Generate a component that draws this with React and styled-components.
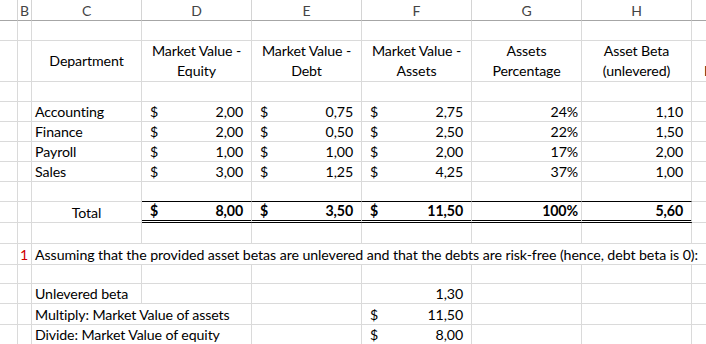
import React from 'react'
import styled, { createGlobalStyle } from 'styled-components'

const GlobalStyle = createGlobalStyle`
    html, body {
        margin: 0;
        padding: 0;
        background: #fff;
        overflow: hidden;
    }
    body {
        font-family: Lato, "Liberation Sans", sans-serif;
        font-size: 14.2px;
        letter-spacing: -0.12px;
        color: #000;
    }
`;

const COLS = '18px 14px repeat(7, 110px)'
const GRID = '#dadada'

const departments = [
    { name: 'Accounting', equity: '2,00', debt: '0,75', assets: '2,75', pct: '24%', beta: '1,10' },
    { name: 'Finance', equity: '2,00', debt: '0,50', assets: '2,50', pct: '22%', beta: '1,50' },
    { name: 'Payroll', equity: '1,00', debt: '1,00', assets: '2,00', pct: '17%', beta: '2,00' },
    { name: 'Sales', equity: '3,00', debt: '1,25', assets: '4,25', pct: '37%', beta: '1,00' },
]

const headers = [
    ['Market Value -', 'Equity'],
    ['Market Value -', 'Debt'],
    ['Market Value -', 'Assets'],
    ['Assets', 'Percentage'],
    ['Asset Beta', '(unlevered)'],
]

function Blank({ n = 1 }) {
    return Array.from({ length: n }).map((_, i) => <Cell key={i} />)
}

function Money({ value, bold, bottom }) {
    return (
        <Cell $bold={bold} $bottom={bottom}>
            <Acct>
                <span>$</span>
                <span>{value}</span>
            </Acct>
        </Cell>
    )
}

function App() {
    return (
        <Sheet>
            <GlobalStyle />

            <HeadRow>
                {['', 'B', 'C', 'D', 'E', 'F', 'G', 'H', ''].map((l, i) => (
                    <HeadCell key={i}>{l}</HeadCell>
                ))}
            </HeadRow>

            <Row $h={20}><Blank n={9} /></Row>

            <Row $h={40}>
                <Blank n={2} />
                <Cell $align="center" $middle>Department</Cell>
                {headers.map((h, i) => (
                    <Cell key={i} $align="center">
                        <Lines>
                            <span>{h[0]}</span>
                            <span>{h[1]}</span>
                        </Lines>
                    </Cell>
                ))}
                <Cell $clip>
                    <Lines $left>
                        <span>&nbsp;</span>
                        <span>Levered Beta</span>
                    </Lines>
                </Cell>
            </Row>

            <Row $h={21}><Blank n={9} /></Row>

            {departments.map((d) => (
                <Row key={d.name} $h={20}>
                    <Blank n={2} />
                    <Cell>{d.name}</Cell>
                    <Money value={d.equity} />
                    <Money value={d.debt} />
                    <Money value={d.assets} />
                    <Cell $align="right" $pad={3}>{d.pct}</Cell>
                    <Cell $align="right">{d.beta}</Cell>
                    <Cell />
                </Row>
            ))}

            <Row $h={20}>
                <Blank n={3} />
                {[0, 1, 2, 3, 4].map((i) => <Cell key={i} $bottom="thin" />)}
                <Cell />
            </Row>

            <Row $h={21}>
                <Blank n={2} />
                <Cell $align="center">Total</Cell>
                <Money value="8,00" bold bottom="double" />
                <Money value="3,50" bold bottom="double" />
                <Money value="11,50" bold bottom="double" />
                <Cell $align="right" $pad={3} $bold $bottom="double">100%</Cell>
                <Cell $align="right" $bold $bottom="double">5,60</Cell>
                <Cell />
            </Row>

            <Row $h={21}><Blank n={9} /></Row>

            <Row $h={21}>
                <Cell />
                <Cell $align="right" $pad={3}><Note>1</Note></Cell>
                <Cell $span={7} $tight>
                    Assuming that the provided asset betas are unlevered and that the debts are risk-free (hence, debt beta is 0):
                </Cell>
            </Row>

            <Row $h={19}><Blank n={9} /></Row>

            <Row $h={20}>
                <Blank n={2} />
                <Cell>Unlevered beta</Cell>
                <Blank n={2} />
                <Cell $align="right">1,30</Cell>
                <Blank n={3} />
            </Row>

            <Row $h={21}>
                <Blank n={2} />
                <Cell $span={2}>Multiply: Market Value of assets</Cell>
                <Cell />
                <Money value="11,50" />
                <Blank n={3} />
            </Row>

            <Row $h={20}>
                <Blank n={2} />
                <Cell $span={2}>Divide: Market Value of equity</Cell>
                <Cell />
                <Money value="8,00" bottom="thin" />
                <Blank n={3} />
            </Row>

            <Row $h={20}><Blank n={9} /></Row>
        </Sheet>
    )
}

export default App

const Sheet = styled.div`
    width: 801px;
    display: flex;
    flex-direction: column;
`;

const HeadRow = styled.div`
    display: grid;
    grid-template-columns: ${COLS};
    height: 21px;
`;

const HeadCell = styled.div`
    display: flex;
    align-items: center;
    justify-content: center;
    border-right: 1px solid #d4d4d4;
    border-bottom: 1px solid #a6a6a6;
    color: #444;
    font-size: 14px;
    line-height: 18px;
    padding-top: 1px;
`;

const Row = styled.div`
    display: grid;
    grid-template-columns: ${COLS};
    height: ${(p) => p.$h}px;
`;

const Cell = styled.div`
    grid-column: span ${(p) => p.$span || 1};
    display: flex;
    align-items: ${(p) => (p.$middle ? 'center' : 'flex-end')};
    justify-content: ${(p) =>
        p.$align === 'right' ? 'flex-end' : p.$align === 'center' ? 'center' : 'flex-start'};
    padding: 0 ${(p) => (p.$align === 'right' ? p.$pad ?? 8 : 3)}px 0 3px;
    border-right: 1px solid ${GRID};
    border-bottom: ${(p) =>
        p.$bottom === 'double'
            ? '3px double #000'
            : p.$bottom === 'thin'
            ? '1px solid #000'
            : `1px solid ${GRID}`};
    font-weight: ${(p) => (p.$bold ? 700 : 400)};
    letter-spacing: ${(p) => (p.$tight ? '-0.08px' : 'inherit')};
    line-height: 18px;
    white-space: nowrap;
    overflow: ${(p) => (p.$clip ? 'hidden' : 'visible')};
    min-width: 0;
`;

const Acct = styled.div`
    flex: 1;
    display: flex;
    justify-content: space-between;
    padding: 0 5px;
`;

const Lines = styled.div`
    display: flex;
    flex-direction: column;
    align-items: ${(p) => (p.$left ? 'flex-start' : 'center')};
    line-height: 20px;
    padding-left: ${(p) => (p.$left ? 9 : 0)}px;
`;

const Note = styled.span`
    color: #d00000;
`;
